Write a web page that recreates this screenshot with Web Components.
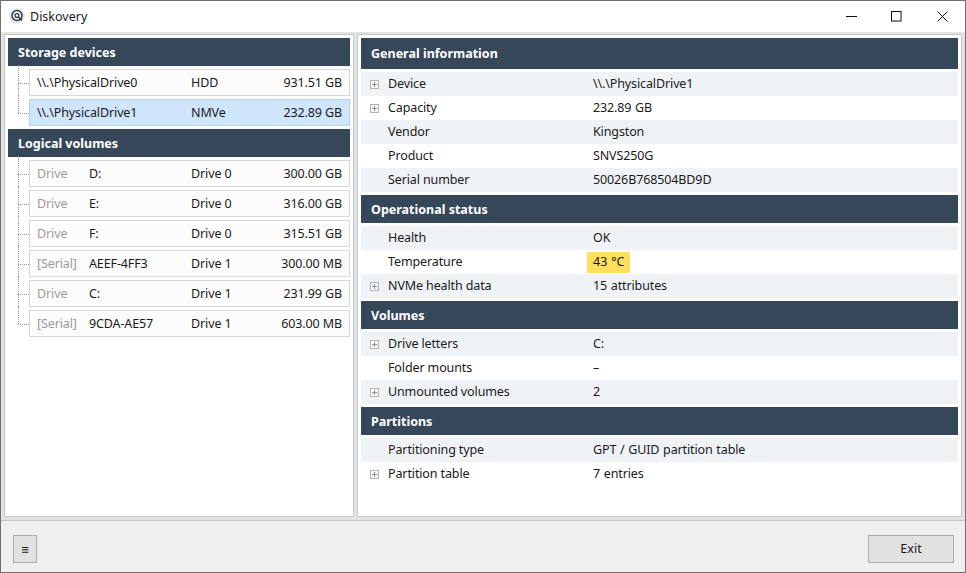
<!DOCTYPE html>
<html>
<head>
<meta charset="utf-8">
<title>Diskovery</title>
<style>
  html, body { margin: 0; height: 100%; }
  body { font: 12.5px "Noto Sans", "Open Sans", sans-serif; color: #1a1a1a; overflow: hidden; }
</style>
</head>
<body>
<disk-window>
  <title-bar slot="title">Diskovery</title-bar>

  <disk-panel slot="left">
    <section-head compact>Storage devices</section-head>
    <tree-list>
      <device-row name="\\.\PhysicalDrive0" kind="HDD" size="931.51 GB"></device-row>
      <device-row name="\\.\PhysicalDrive1" kind="NMVe" size="232.89 GB" selected last></device-row>
    </tree-list>
    <section-head compact>Logical volumes</section-head>
    <tree-list>
      <device-row prefix="Drive" name="D:" kind="Drive 0" size="300.00 GB"></device-row>
      <device-row prefix="Drive" name="E:" kind="Drive 0" size="316.00 GB"></device-row>
      <device-row prefix="Drive" name="F:" kind="Drive 0" size="315.51 GB"></device-row>
      <device-row prefix="[Serial]" name="AEEF-4FF3" kind="Drive 1" size="300.00 MB"></device-row>
      <device-row prefix="Drive" name="C:" kind="Drive 1" size="231.99 GB"></device-row>
      <device-row prefix="[Serial]" name="9CDA-AE57" kind="Drive 1" size="603.00 MB" last></device-row>
    </tree-list>
  </disk-panel>

  <disk-panel slot="right" wide>
    <section-head tall>General information</section-head>
    <info-list>
      <info-row expand label="Device" value="\\.\PhysicalDrive1"></info-row>
      <info-row expand label="Capacity" value="232.89 GB"></info-row>
      <info-row label="Vendor" value="Kingston"></info-row>
      <info-row label="Product" value="SNVS250G"></info-row>
      <info-row label="Serial number" value="50026B768504BD9D"></info-row>
    </info-list>
    <section-head>Operational status</section-head>
    <info-list>
      <info-row label="Health" value="OK"></info-row>
      <info-row label="Temperature" value="43 °C" warn></info-row>
      <info-row expand label="NVMe health data" value="15 attributes"></info-row>
    </info-list>
    <section-head>Volumes</section-head>
    <info-list>
      <info-row expand label="Drive letters" value="C:"></info-row>
      <info-row label="Folder mounts" value="–"></info-row>
      <info-row expand label="Unmounted volumes" value="2"></info-row>
    </info-list>
    <section-head>Partitions</section-head>
    <info-list>
      <info-row label="Partitioning type" value="GPT / GUID partition table"></info-row>
      <info-row expand label="Partition table" value="7 entries"></info-row>
    </info-list>
  </disk-panel>

  <flat-button slot="menu" narrow>≡</flat-button>
  <flat-button slot="exit">Exit</flat-button>
</disk-window>

<script>
  // small helper, every element just sets its shadow html once
  class ShadowEl extends HTMLElement {
    constructor() {
      super();
      this.attachShadow({mode: 'open'});
    }
  }

  class DiskWindow extends ShadowEl {
    constructor() {
      super();
      this.shadowRoot.innerHTML = `
        <style>
          :host {
            display: flex;
            flex-direction: column;
            box-sizing: border-box;
            width: 966px;
            height: 573px;
            border: 1px solid #6f6f6f;
            background: #efefef;
          }
          .main {
            flex: 1;
            min-height: 0;
            display: flex;
            gap: 3px;
            padding: 2px 3px 3px 3px;
            background: #e3e3e3;
            border-bottom: 1px solid #c4c4c4;
          }
          .foot {
            height: 51px;
            display: flex;
            justify-content: space-between;
            align-items: flex-start;
            box-sizing: border-box;
            padding: 14px 11px 0 12px;
          }
        </style>
        <slot name="title"></slot>
        <div class="main"><slot name="left"></slot><slot name="right"></slot></div>
        <div class="foot"><slot name="menu"></slot><slot name="exit"></slot></div>
      `;
    }
  }

  class TitleBar extends ShadowEl {
    constructor() {
      super();
      this.shadowRoot.innerHTML = `
        <style>
          :host {
            display: flex;
            align-items: center;
            height: 31px;
            background: #fff;
            font-size: 12.5px;
          }
          .logo { margin: 0 5px 1px 8px; display: block; }
          .text { flex: 1; padding-bottom: 1px; }
          .btns { display: flex; }
          .btn { width: 45px; height: 31px; display: flex; justify-content: center; box-sizing: border-box; padding-top: 10px; }
          .shift svg { margin-right: 2px; }
        </style>
        <svg class="logo" width="16" height="16" viewBox="0 0 16 16">
          <circle cx="8" cy="8" r="7.8" fill="#e4e6e9"/>
          <circle cx="8" cy="7.5" r="5" fill="#f6f7f8" stroke="#333a44" stroke-width="1.5"/>
          <circle cx="8" cy="7.5" r="1.9" fill="none" stroke="#333a44" stroke-width="1.3"/>
          <path d="M9.6 9.2l3.2 3.2" stroke="#333a44" stroke-width="1.6"/>
        </svg>
        <span class="text"><slot></slot></span>
        <div class="btns">
          <div class="btn shift"><svg width="11" height="11"><path d="M0 5.5h11" stroke="#111"/></svg></div>
          <div class="btn shift"><svg width="11" height="11"><rect x=".5" y=".5" width="9.5" height="9.5" fill="none" stroke="#111"/></svg></div>
          <div class="btn"><svg width="11" height="11"><path d="M.5 .5l10 10M10.5 .5l-10 10" stroke="#111" stroke-width="1"/></svg></div>
        </div>
      `;
    }
  }

  class DiskPanel extends ShadowEl {
    constructor() {
      super();
      this.shadowRoot.innerHTML = `
        <style>
          :host {
            display: flex;
            flex-direction: column;
            box-sizing: border-box;
            width: 350px;
            height: 100%;
            background: #fff;
            border: 1px solid #c8c8c8;
            padding: 3px;
            gap: 3px;
          }
          :host([wide]) { width: 605px; }
        </style>
        <slot></slot>
      `;
    }
  }

  class SectionHead extends ShadowEl {
    constructor() {
      super();
      this.shadowRoot.innerHTML = `
        <style>
          :host {
            display: flex;
            align-items: center;
            height: 28px;
            padding-left: 10px;
            background: #36475a;
            color: #fff;
            font-weight: 700;
            font-size: 12.5px;
          }
          :host([tall]) { height: 31px; }
        </style>
        <slot></slot>
      `;
    }
  }

  class TreeList extends ShadowEl {
    constructor() {
      super();
      this.shadowRoot.innerHTML = `
        <style>
          :host { display: flex; flex-direction: column; gap: 3px; }
        </style>
        <slot></slot>
      `;
    }
  }

  class DeviceRow extends ShadowEl {
    connectedCallback() {
      const prefix = this.getAttribute('prefix');
      this.shadowRoot.innerHTML = `
        <style>
          :host {
            display: block;
            position: relative;
            margin-left: 21px;
            letter-spacing: -.12px;
            --line: #9a9a9a;
          }
          /* tree connector, sits in the gutter left of the box */
          :host::before {
            content: '';
            position: absolute;
            left: -11px;
            top: -4px;
            bottom: -3px;
            border-left: 1px dotted var(--line);
          }
          :host([last])::before { bottom: 50%; }
          :host::after {
            content: '';
            position: absolute;
            left: -11px;
            width: 11px;
            top: 50%;
            border-top: 1px dotted var(--line);
          }
          .box {
            display: grid;
            grid-template-columns: 52px 102px 1fr auto;
            align-items: center;
            box-sizing: border-box;
            height: 27px;
            padding: 0 7px;
            background: #fcfcfc;
            border: 1px solid #d8d8dc;
          }
          :host([selected]) .box { background: #cfe5fa; border-color: #b4d2ea; }
          .prefix { color: #9b9b9b; }
          .wide { grid-column: 1 / 3; }
          .size { text-align: right; }
        </style>
        <div class="box">
          ${prefix ? `<span class="prefix">${prefix}</span><span>${this.getAttribute('name')}</span>`
                   : `<span class="wide">${this.getAttribute('name')}</span>`}
          <span>${this.getAttribute('kind')}</span>
          <span class="size">${this.getAttribute('size')}</span>
        </div>
      `;
    }
  }

  class InfoList extends ShadowEl {
    constructor() {
      super();
      this.shadowRoot.innerHTML = `
        <style>
          :host { display: block; margin-right: 0; }
          ::slotted(info-row:nth-child(odd)) { background: #f0f3f6; }
        </style>
        <slot></slot>
      `;
    }
  }

  class InfoRow extends ShadowEl {
    connectedCallback() {
      const plus = this.hasAttribute('expand');
      this.shadowRoot.innerHTML = `
        <style>
          :host {
            display: grid;
            grid-template-columns: 27px 205px 1fr;
            align-items: center;
            height: 24px;
            letter-spacing: -.12px;
          }
          .plus { display: block; margin-left: 9px; }
          .txt { padding-bottom: 2px; }
          .val { display: flex; word-spacing: .6px; }
          .warn {
            box-sizing: border-box;
            height: 21px;
            padding: 0 6px 2px;
            margin-left: -6px;
            background: #ffdf5b;
            display: flex;
            align-items: center;
            letter-spacing: 0;
          }
        </style>
        <span>${plus ? `<svg class="plus" width="9" height="9">
          <rect x=".5" y=".5" width="8" height="8" fill="#fafafa" stroke="#b4b4b4"/>
          <path d="M2 4.5h5M4.5 2v5" stroke="#8c8c8c"/></svg>` : ''}</span>
        <span class="txt">${this.getAttribute('label')}</span>
        <span class="val"><span class="${this.hasAttribute('warn') ? 'warn' : 'txt'}">${this.getAttribute('value')}</span></span>
      `;
    }
  }

  class FlatButton extends ShadowEl {
    constructor() {
      super();
      this.shadowRoot.innerHTML = `
        <style>
          :host {
            display: flex;
            align-items: center;
            justify-content: center;
            box-sizing: border-box;
            width: 86px;
            height: 28px;
            padding-bottom: 2px;
            background: #e1e1e1;
            border: 1px solid #adadad;
          }
          :host([narrow]) { width: 24px; padding-bottom: 0; }
        </style>
        <slot></slot>
      `;
    }
  }

  customElements.define('disk-window', DiskWindow);
  customElements.define('title-bar', TitleBar);
  customElements.define('disk-panel', DiskPanel);
  customElements.define('section-head', SectionHead);
  customElements.define('tree-list', TreeList);
  customElements.define('device-row', DeviceRow);
  customElements.define('info-list', InfoList);
  customElements.define('info-row', InfoRow);
  customElements.define('flat-button', FlatButton);
</script>
</body>
</html>
